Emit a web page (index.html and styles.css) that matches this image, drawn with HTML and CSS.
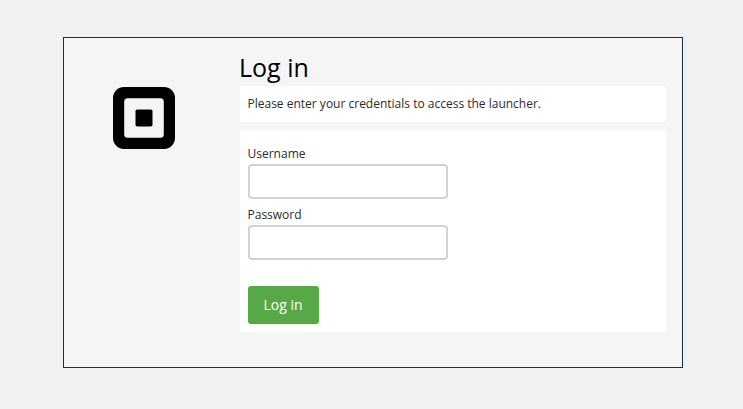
FILE: index.html
```html
<!DOCTYPE html>
<html lang="en">
<head>
<meta charset="utf-8">
<title>Log in</title>
<link rel="stylesheet" href="styles.css">
</head>
<body>
<main class="card">
  <div class="brand">
    <svg class="logo" viewBox="0 0 62 62" aria-hidden="true">
      <rect width="62" height="62" rx="11" fill="#000"/>
      <rect x="11.2" y="11.2" width="39.6" height="39.6" rx="3.5" fill="#f5f5f5"/>
      <rect x="22.5" y="22.5" width="17" height="17" rx="1.8" fill="#000"/>
    </svg>
  </div>
  <section class="content">
    <h1 class="title">Log in</h1>
    <p class="message">Please enter your credentials to access the launcher.</p>
    <form class="form">
      <label class="label" for="username">Username</label>
      <input class="input" id="username" type="text">
      <label class="label" for="password">Password</label>
      <input class="input" id="password" type="password">
      <button class="button" type="submit">Log in</button>
    </form>
  </section>
</main>
</body>
</html>
```
FILE: styles.css
```css
* { box-sizing: border-box; }
body {
  margin: 0;
  background: #f1f1f1;
  color: #2b2b2b;
  font: 12px/18px "Open Sans", sans-serif;
}
.card {
  display: flex;
  width: 620px;
  height: 331px;
  margin: 37px 0 0 63px;
  padding: 0 16px 0 0;
  border: 1px solid #11304a;
  background: #f5f5f5;
}
.brand {
  width: 176px;
  padding: 49px 0 0 49px;
}
.logo {
  display: block;
  width: 62px;
  height: 62px;
}
.content { flex: 1; }
.title {
  height: 32px;
  margin: 13px 0 3px -1px;
  color: #000;
  font-size: 25px;
  font-weight: 400;
  line-height: 32px;
}
.message {
  height: 36px;
  margin: 0 0 8px;
  padding: 9px 7.5px;
  background: #fff;
}
.form {
  display: flex;
  flex-direction: column;
  align-items: flex-start;
  height: 202px;
  padding: 15px 8px 8px;
  background: #fff;
}
.label {
  height: 19px;
  margin-left: -0.5px;
}
.input {
  width: 200px;
  height: 35px;
  margin: 0 0 7px;
  padding: 6px;
  border: 2px solid #d2d2d2;
  border-radius: 4px;
  background: #fff;
  font: inherit;
}
.button {
  width: 71px;
  height: 38px;
  margin-top: auto;
  padding: 0 1px 0 0;
  border: 0;
  border-radius: 3px;
  background: #57a846;
  color: #fff;
  font: 500 14px/20px "Open Sans", sans-serif;
}
```
